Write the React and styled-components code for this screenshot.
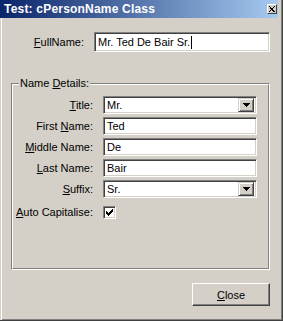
import React from "react";
import styled, { createGlobalStyle } from "styled-components";

const GlobalStyle = createGlobalStyle`
    body {
        margin: 0;
        background: #d4d0c8;
        font-family: "Liberation Sans", Arial, sans-serif;
        font-size: 11px;
        color: #000;
    }
`;

function DropButton() {
    return (
        <DropArrow>
            <svg width="7" height="4" viewBox="0 0 7 4" shapeRendering="crispEdges">
                <polygon points="0,0 7,0 3.5,4" fill="#000" />
            </svg>
        </DropArrow>
    );
}

function Combo({ value }) {
    return (
        <ComboBox>
            <FieldText>{value}</FieldText>
            <DropButton />
        </ComboBox>
    );
}

function App() {
    return (
        <Window>
            <GlobalStyle />
            <TitleBar>
                <TitleText>Test: cPersonName Class</TitleText>
                <CaptionButton>
                    <svg width="6" height="6" viewBox="0 0 6 6" shapeRendering="crispEdges">
                        <path d="M0 0 L6 6 M6 0 L0 6" stroke="#000" strokeWidth="1.4" />
                    </svg>
                </CaptionButton>
            </TitleBar>
            <Client>
                <FullRow>
                    <Label><u>F</u>ullName:</Label>
                    <TextBox>
                        <FieldText>Mr. Ted De Bair Sr.</FieldText>
                        <Caret />
                    </TextBox>
                </FullRow>

                <Group>
                    <GroupInner>
                        <Legend>Name <u>D</u>etails:</Legend>
                        <Rows>
                            <Label><u>T</u>itle:</Label>
                            <Combo value="Mr." />
                            <Label>First <u>N</u>ame:</Label>
                            <TextBox><FieldText>Ted</FieldText></TextBox>
                            <Label><u>M</u>iddle Name:</Label>
                            <TextBox><FieldText>De</FieldText></TextBox>
                            <Label><u>L</u>ast Name:</Label>
                            <TextBox><FieldText>Bair</FieldText></TextBox>
                            <Label><u>S</u>uffix:</Label>
                            <Combo value="Sr." />
                            <Label $top={4}><u>A</u>uto Capitalise:</Label>
                            <CheckCell $top={4}>
                                <CheckBox>
                                    <svg width="7" height="7" viewBox="0 0 7 7" shapeRendering="crispEdges">
                                        <path d="M0 2h1v3h-1z M1 3h1v3h-1z M2 4h1v3h-1z M3 3h1v3h-1z M4 2h1v3h-1z M5 1h1v3h-1z M6 0h1v3h-1z" fill="#000" />
                                    </svg>
                                </CheckBox>
                            </CheckCell>
                        </Rows>
                    </GroupInner>
                </Group>

                <ButtonRow>
                    <PushButton><u>C</u>lose</PushButton>
                </ButtonRow>
            </Client>
        </Window>
    );
}

export default App;

const Window = styled.div`
    width: 283px;
    height: 321px;
    box-sizing: border-box;
    padding-right: 4px;
    background: #d4d0c8;
    border-right: 1px solid #404040;
    border-bottom: 1px solid #404040;
    box-shadow: inset -1px -1px #808080;
    display: flex;
    flex-direction: column;
`;

const TitleBar = styled.div`
    height: 18px;
    flex-shrink: 0;
    display: flex;
    align-items: center;
    justify-content: space-between;
    padding: 0 1px 0 4px;
    background: linear-gradient(to right, #0a246a, #a6caf0);
`;

const TitleText = styled.span`
    color: #fff;
    font-weight: bold;
    font-size: 12px;
    letter-spacing: 0.2px;
`;

const CaptionButton = styled.div`
    width: 10px;
    height: 10px;
    box-sizing: border-box;
    display: flex;
    align-items: center;
    justify-content: center;
    background: #d4d0c8;
    border: 1px solid;
    border-color: #fff #404040 #404040 #fff;
`;

const Client = styled.div`
    flex: 1;
    padding: 14px 8px 0 11px;
    box-shadow: inset 1px 0 #d4d0c8, inset 2px 0 #fff;
`;

const FullRow = styled.div`
    display: grid;
    grid-template-columns: 73px 1fr;
    column-gap: 10px;
    align-items: center;
`;

const Label = styled.label`
    text-align: right;
    white-space: nowrap;
    margin-top: ${(p) => p.$top || 0}px;
`;

const sunken = `
    box-sizing: border-box;
    background: #fff;
    border: 1px solid;
    border-color: #808080 #fff #fff #808080;
    box-shadow: inset 1px 1px #404040, inset -1px -1px #d4d0c8;
`;

const TextBox = styled.div`
    ${sunken}
    height: 20px;
    display: flex;
    align-items: center;
    padding: 0 3px;
`;

const FieldText = styled.span`
    font-size: 11px;
    white-space: nowrap;
`;

const Caret = styled.span`
    display: inline-block;
    width: 1px;
    height: 13px;
    margin-left: 1px;
    background: #000;
`;

const Group = styled.div`
    position: relative;
    margin-top: 31px;
    height: 187px;
    box-sizing: border-box;
    border: 1px solid;
    border-color: #808080 #fff #fff #808080;
`;

const GroupInner = styled.div`
    height: 100%;
    box-sizing: border-box;
    border: 1px solid;
    border-color: #fff #808080 #808080 #fff;
    padding: 11px 11px 0 0;
`;

const Legend = styled.span`
    position: absolute;
    left: 7px;
    top: -7px;
    padding: 0 1px;
    background: #d4d0c8;
    line-height: 13px;
`;

const Rows = styled.div`
    display: grid;
    grid-template-columns: 80px 154px;
    grid-auto-rows: 18px;
    column-gap: 10px;
    row-gap: 3px;
    align-items: center;

    ${TextBox} {
        height: 18px;
    }
`;

const ComboBox = styled.div`
    ${sunken}
    height: 18px;
    display: flex;
    align-items: center;
    justify-content: space-between;
    padding: 2px 2px 2px 3px;
`;

const DropArrow = styled.div`
    width: 16px;
    height: 14px;
    box-sizing: border-box;
    display: flex;
    align-items: center;
    justify-content: center;
    background: #d4d0c8;
    border: 1px solid;
    border-color: #d4d0c8 #404040 #404040 #d4d0c8;
    box-shadow: inset 1px 1px #fff, inset -1px -1px #808080;
`;

const CheckCell = styled.div`
    margin-top: ${(p) => p.$top || 0}px;
    display: flex;
    align-items: center;
`;

const CheckBox = styled.div`
    ${sunken}
    width: 13px;
    height: 13px;
    display: flex;
    align-items: center;
    justify-content: center;
`;

const ButtonRow = styled.div`
    display: flex;
    justify-content: flex-end;
    margin-top: 13px;
`;

const PushButton = styled.button`
    width: 78px;
    height: 23px;
    box-sizing: border-box;
    padding: 0;
    font-family: "Liberation Sans", Arial, sans-serif;
    font-size: 11px;
    color: #000;
    background: #d4d0c8;
    border: 1px solid;
    border-color: #fff #404040 #404040 #fff;
    box-shadow: inset -1px -1px #808080;
`;
